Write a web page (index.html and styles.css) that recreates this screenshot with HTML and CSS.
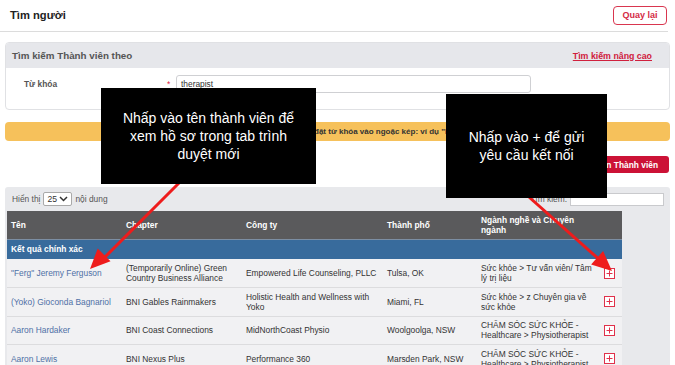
FILE: index.html
```html
<!DOCTYPE html>
<html lang="vi">
<head>
<meta charset="utf-8">
<title>Tìm người</title>
<link rel="stylesheet" href="styles.css">
</head>
<body>
<div class="page">
  <header class="topbar">
    <h1 class="title">Tìm người</h1>
    <a class="btn-outline" href="#">Quay lại</a>
  </header>

  <main class="content">
    <section class="panel">
      <div class="panel-head">
        <span class="panel-title">Tìm kiếm Thành viên theo</span>
        <a class="adv-link" href="#">Tìm kiếm nâng cao</a>
      </div>
      <div class="panel-body">
        <label class="field-label">Từ khóa</label>
        <span class="req">*</span>
        <div class="text-input">therapist</div>
      </div>
    </section>

    <div class="notice">Để tìm kiếm cụm từ chính xác, đặt từ khóa vào ngoặc kép: ví dụ "Ivan Misner"</div>

    <div class="actions">
      <a class="btn-red" href="#">Nhắn tin Thành viên</a>
    </div>

    <section class="results">
      <div class="controls">
        <div class="show">
          <span>Hiển thị</span>
          <span class="select">25
            <svg class="chev" width="9" height="6" viewBox="0 0 9 6"><path d="M1 1l3.5 3.5L8 1" fill="none" stroke="#333" stroke-width="1.5"/></svg>
          </span>
          <span>nội dung</span>
        </div>
        <div class="filter">
          <span>Tìm kiếm:</span>
          <span class="filter-input"></span>
        </div>
      </div>
      <table class="grid">
        <colgroup>
          <col class="c1"><col class="c2"><col class="c3"><col class="c4"><col class="c5"><col class="c6">
        </colgroup>
        <thead>
          <tr>
            <th>Tên</th><th>Chapter</th><th>Công ty</th><th>Thành phố</th><th>Ngành nghề và Chuyên ngành</th><th></th>
          </tr>
        </thead>
        <tbody>
          <tr class="group"><td colspan="6">Kết quả chính xác</td></tr>
          <tr>
            <td><a class="name" href="#">"Ferg" Jeremy Ferguson</a></td>
            <td>(Temporarily Online) Green Country Business Alliance</td>
            <td>Empowered Life Counseling, PLLC</td>
            <td>Tulsa, OK</td>
            <td>Sức khỏe &gt; Tư vấn viên/ Tâm lý trị liệu</td>
            <td class="add"><svg class="plus" width="11" height="11" viewBox="0 0 11 11"><rect x="0.5" y="0.5" width="10" height="10" fill="#fff" stroke="#e0304a"/><path d="M5.5 2.5v6M2.5 5.5h6" stroke="#e0304a" stroke-width="1"/></svg></td>
          </tr>
          <tr>
            <td><a class="name" href="#">(Yoko) Gioconda Bagnariol</a></td>
            <td>BNI Gables Rainmakers</td>
            <td>Holistic Health and Wellness with Yoko</td>
            <td>Miami, FL</td>
            <td>Sức khỏe &gt; z Chuyên gia về sức khỏe</td>
            <td class="add"><svg class="plus" width="11" height="11" viewBox="0 0 11 11"><rect x="0.5" y="0.5" width="10" height="10" fill="#fff" stroke="#e0304a"/><path d="M5.5 2.5v6M2.5 5.5h6" stroke="#e0304a" stroke-width="1"/></svg></td>
          </tr>
          <tr>
            <td><a class="name" href="#">Aaron Hardaker</a></td>
            <td>BNI Coast Connections</td>
            <td>MidNorthCoast Physio</td>
            <td>Woolgoolga, NSW</td>
            <td>CHĂM SÓC SỨC KHỎE - Healthcare &gt; Physiotherapist</td>
            <td class="add"><svg class="plus" width="11" height="11" viewBox="0 0 11 11"><rect x="0.5" y="0.5" width="10" height="10" fill="#fff" stroke="#e0304a"/><path d="M5.5 2.5v6M2.5 5.5h6" stroke="#e0304a" stroke-width="1"/></svg></td>
          </tr>
          <tr>
            <td><a class="name" href="#">Aaron Lewis</a></td>
            <td>BNI Nexus Plus</td>
            <td>Performance 360</td>
            <td>Marsden Park, NSW</td>
            <td>CHĂM SÓC SỨC KHỎE - Healthcare &gt; Physiotherapist</td>
            <td class="add"><svg class="plus" width="11" height="11" viewBox="0 0 11 11"><rect x="0.5" y="0.5" width="10" height="10" fill="#fff" stroke="#e0304a"/><path d="M5.5 2.5v6M2.5 5.5h6" stroke="#e0304a" stroke-width="1"/></svg></td>
          </tr>
        </tbody>
      </table>
    </section>
  </main>

  <svg class="arrows" width="675" height="365" viewBox="0 0 675 365">
    <line x1="186" y1="176" x2="100" y2="262" stroke="#ee1c1c" stroke-width="3"/>
    <polygon points="90,269 110.5,261.3 97.7,248.5" fill="#ee1c1c"/>
    <line x1="520" y1="189" x2="602" y2="262" stroke="#ee1c1c" stroke-width="3"/>
    <polygon points="612,271 591.1,264.4 603.1,251" fill="#ee1c1c"/>
  </svg>

  <div class="callout callout-name">Nhấp vào tên thành viên để<br>xem hồ sơ trong tab trình<br>duyệt mới</div>
  <div class="callout callout-add">Nhấp vào + để gửi<br>yêu cầu kết nối</div>
</div>
</body>
</html>
```

FILE: styles.css
```css
* { box-sizing: border-box; }
html, body { margin: 0; padding: 0; background: #fff; }
body {
  font-family: "Liberation Sans", Arial, sans-serif;
  color: #333;
  font-size: 8.4px;
  width: 675px;
  height: 365px;
  overflow: hidden;
}
a { text-decoration: none; }
.page { position: relative; width: 675px; height: 365px; overflow: hidden; }

.topbar {
  display: flex;
  justify-content: space-between;
  align-items: center;
  width: 668px;
  height: 32px;
  border-bottom: 1px solid #dcdcdc;
  padding: 0 1px 1px 10px;
}
.title { margin: 0; font-size: 11.2px; font-weight: bold; color: #222; }
.btn-outline {
  display: flex;
  align-items: center;
  justify-content: center;
  width: 54px;
  height: 19px;
  border: 1px solid #d9364f;
  border-radius: 4px;
  color: #d42a45;
  font-size: 9px;
  font-weight: bold;
}

.content { padding: 10px 5px 0 5px; }

.panel {
  border: 1px solid #e0e1e4;
  border-radius: 4px;
  overflow: hidden;
  height: 68px;
}
.panel-head {
  display: flex;
  justify-content: space-between;
  align-items: center;
  height: 25px;
  background: #e6e7eb;
  padding: 0 17px 0 6px;
}
.panel-title { font-size: 9.8px; font-weight: bold; color: #555; }
.adv-link { color: #d0203d; text-decoration: underline; font-size: 8.8px; font-weight: bold; }
.panel-body {
  display: flex;
  align-items: center;
  padding: 7px 0 0 18px;
}
.field-label { width: 143px; color: #555; font-weight: bold; font-size: 8.4px; }
.req { width: 9px; color: #e0203d; font-size: 8.4px; }
.text-input {
  width: 355px;
  height: 18px;
  border: 1px solid #cfd0d3;
  border-radius: 3px;
  padding: 0 4px;
  display: flex;
  align-items: center;
  color: #333;
  font-size: 8.4px;
}

.notice {
  margin-top: 12px;
  height: 19px;
  border-radius: 4px;
  background: #f6c15b;
  display: flex;
  align-items: center;
  justify-content: center;
  padding-left: 14px;
  font-weight: bold;
  font-size: 8px;
  color: #333;
  white-space: nowrap;
}

.actions { display: flex; justify-content: flex-end; margin-top: 15px; padding-right: 1px; }
.btn-red {
  display: flex;
  align-items: center;
  height: 17px;
  padding: 0 11px;
  border-radius: 3px;
  background: #cc1236;
  color: #fff;
  font-weight: bold;
  font-size: 8.4px;
}

.results {
  margin-top: 14px;
  background: #e8e9ec;
  border-radius: 3px 3px 0 0;
  padding: 0 0 0 2px;
  height: 200px;
}
.controls {
  display: flex;
  justify-content: space-between;
  align-items: center;
  height: 24px;
  padding: 0 6px 0 5px;
  color: #555;
}
.show, .filter { display: flex; align-items: center; gap: 3px; }
.select {
  display: flex;
  align-items: center;
  justify-content: space-between;
  width: 29px;
  height: 14px;
  border: 1px solid #a9a9a9;
  border-radius: 2px;
  background: #fff;
  padding: 0 3px 0 3px;
  color: #333;
  font-size: 8.6px;
}
.filter-input {
  width: 94px;
  height: 13px;
  background: #fff;
  border: 1px solid #c9cacd;
}

.grid {
  border-collapse: collapse;
  width: 615px;
  table-layout: fixed;
}
.c1 { width: 115px; }
.c2 { width: 120px; }
.c3 { width: 141px; }
.c4 { width: 94px; }
.c5 { width: 123px; }
.c6 { width: 22px; }
.grid th {
  background: #5a5a5c;
  color: #fff;
  font-weight: bold;
  text-align: left;
  font-size: 8.4px;
  line-height: 10px;
  height: 28px;
  padding: 0 4px;
  vertical-align: middle;
}
.grid .group td {
  background: #386b9c;
  color: #fff;
  font-weight: bold;
  height: 20px;
  padding: 0 4px;
  border-top: 1px solid #7c8ea3;
}
.grid tbody tr:not(.group) td {
  background: #f1f1f3;
  border-bottom: 1px solid #dcdcde;
  height: 28.5px;
  padding: 0 4px;
  line-height: 10px;
  vertical-align: middle;
  color: #333;
}
.name { color: #4f70a6; }
.grid td.add { padding: 0 0 0 4px; }
.plus { display: block; }

.arrows { position: absolute; left: 0; top: 0; pointer-events: none; }

.callout {
  position: absolute;
  background: #000;
  color: #fff;
  font-size: 14px;
  line-height: 18px;
  text-align: center;
  display: flex;
  align-items: center;
  justify-content: center;
}
.callout-name { left: 101px; top: 88px; width: 215px; height: 96px; }
.callout-add { left: 446px; top: 94px; width: 161px; height: 104px; }
```
